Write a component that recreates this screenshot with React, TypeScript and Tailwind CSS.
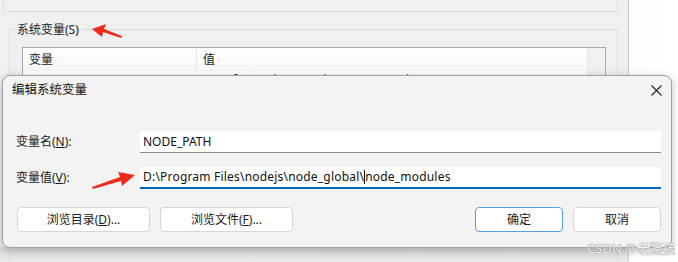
import React from "react";

const font = { fontFamily: '"Noto Sans", "Noto Sans CJK SC", sans-serif' };

function Btn({ children, primary }: { children: React.ReactNode; primary?: boolean }) {
  return (
    <div
      className={
        "flex items-center justify-center h-[25px] rounded-[4px] bg-white text-[12px] text-[#1a1a1a] " +
        (primary ? "border border-[#5b9fe0]" : "border border-[#d6d6d6]")
      }
    >
      {children}
    </div>
  );
}

export default function App() {
  return (
    <div className="relative w-[678px] h-[262px] overflow-hidden bg-white" style={font}>
      {/* desktop right area */}
      <div className="absolute inset-0 bg-gradient-to-r from-[#f3f3f3] to-white" />
      {/* background window */}
      <div className="absolute left-0 top-0 w-[629px] h-[262px] bg-[#f0f0f0] border-r border-[#c8c8c8]">
        <div className="ml-[3px] w-[615px] h-[12px] border-l border-r border-b border-[#dcdcdc]" />
        <div className="relative ml-[9px] mt-[17px] w-[609px] h-[240px] border-l border-t border-r border-[#dcdcdc]">
          <div className="absolute left-[5px] top-[-7px] px-[2px] bg-[#f0f0f0] text-[12px] leading-[14px] text-[#222]">
            系统变量(S)
          </div>
          <div className="ml-[12px] mt-[17px] w-[584px] h-[40px] border border-[#a8a8a8] bg-white flex overflow-hidden">
            <div className="flex-1 flex flex-col">
              <div className="flex h-[23px] shrink-0 bg-gradient-to-b from-white to-[#f6f6f6] text-[12px] text-[#222]">
                <div className="w-[174px] border-r border-[#e5e5e5] pl-[6px] flex items-center">变量</div>
                <div className="pl-[6px] flex items-center">值</div>
              </div>
              <div className="flex text-[12px] text-[#222] leading-[16px] h-[5px] overflow-hidden">
                <div className="w-[174px] pl-[6px] pt-[1px]">MAVEN_HOME</div>
                <div className="pl-[6px] pt-[1px] whitespace-nowrap">D:\soft\DeveloperTools\maven\apache-maven-3.3.9</div>
              </div>
            </div>
            <div className="w-[18px] bg-[#f0f0f0] border-l border-[#e8e8e8]" />
          </div>
        </div>
      </div>
      <div className="absolute left-[322px] top-[240px] w-[88px] h-[12px] border border-[#cfcfcf] rounded-b-[3px] bg-[#e9e9e9]" />
      <div className="absolute left-[420px] top-[240px] w-[88px] h-[12px] border border-[#cfcfcf] rounded-b-[3px] bg-[#e9e9e9]" />
      <div className="absolute left-[516px] top-[240px] w-[88px] h-[12px] border border-[#cfcfcf] rounded-b-[3px] bg-[#e9e9e9]" />
      <div className="absolute left-0 top-[247px] w-[629px] h-[15px] bg-gradient-to-b from-[#d0d0d0]/70 to-[#e4e4e4]/40" />

      {/* red arrow 1 */}
      <svg className="absolute left-[88px] top-[22px]" width="40" height="20" viewBox="0 0 40 20">
        <polygon points="4,7 18,2 16,7 34,14 33,16 15,10 14,15" fill="#f0291a" />
      </svg>

      {/* dialog */}
      <div className="absolute left-[2px] top-[75px] w-[670px] h-[173px] rounded-[8px] border border-[#a0a0a0] bg-[#f3f3f3] shadow-[0_2px_10px_rgba(0,0,0,0.25)] flex flex-col">
        <div className="h-[29px] flex items-center justify-between pl-[9px] pr-[9px]">
          <span className="text-[12.5px] text-[#111]">编辑系统变量</span>
          <svg width="11" height="11" viewBox="0 0 11 11">
            <path d="M0.5 0.5 L10.5 10.5 M10.5 0.5 L0.5 10.5" stroke="#222" strokeWidth="1.1" />
          </svg>
        </div>
        <div className="mt-[26px] flex items-center pl-[13px] pr-[10px]">
          <div className="w-[124px] text-[12px] text-[#1a1a1a]">
            变量名(<span className="underline">N</span>):
          </div>
          <div className="flex-1 h-[22px] bg-white border-b border-[#8a8a8a] flex items-center pl-[3px] text-[12px] text-[#111]">
            NODE_PATH
          </div>
        </div>
        <div className="mt-[14px] flex items-center pl-[13px] pr-[10px]">
          <div className="w-[124px] text-[12px] text-[#1a1a1a]">
            变量值(<span className="underline">V</span>):
          </div>
          <div className="flex-1 h-[22px] bg-white border-b-2 border-[#0067c0] flex items-center pl-[3px] text-[12px] tracking-[0.2px] text-[#111] whitespace-nowrap">
            D:\Program Files\nodejs\node_global\
            <span className="inline-block w-px h-[14px] bg-[#111]" />
            node_modules
          </div>
        </div>
        <div className="mt-[18px] flex pl-[14px] pr-[10px]">
          <div className="w-[133px]">
            <Btn>
              浏览目录(<span className="underline">D</span>)...
            </Btn>
          </div>
          <div className="ml-[10px] w-[133px]">
            <Btn>
              浏览文件(<span className="underline">F</span>)...
            </Btn>
          </div>
          <div className="flex-1" />
          <div className="w-[88px]">
            <Btn primary>确定</Btn>
          </div>
          <div className="ml-[10px] w-[88px]">
            <Btn>取消</Btn>
          </div>
        </div>
      </div>

      {/* red arrow 2 */}
      <svg className="absolute left-[88px] top-[168px]" width="52" height="26" viewBox="0 0 52 26">
        <polygon points="47,7 30,4 32,9 4,19 5,21 33,13 34,18" fill="#f0291a" />
      </svg>

      {/* watermark */}
      <div
        className="absolute left-[587px] top-[241px] text-[13px] leading-[15px] text-[#f4f4f4] whitespace-nowrap"
        style={{ textShadow: "0 0 1px #808080, 0 0 1px #808080" }}
      >
        CSDN @老猿孩
      </div>
    </div>
  );
}
